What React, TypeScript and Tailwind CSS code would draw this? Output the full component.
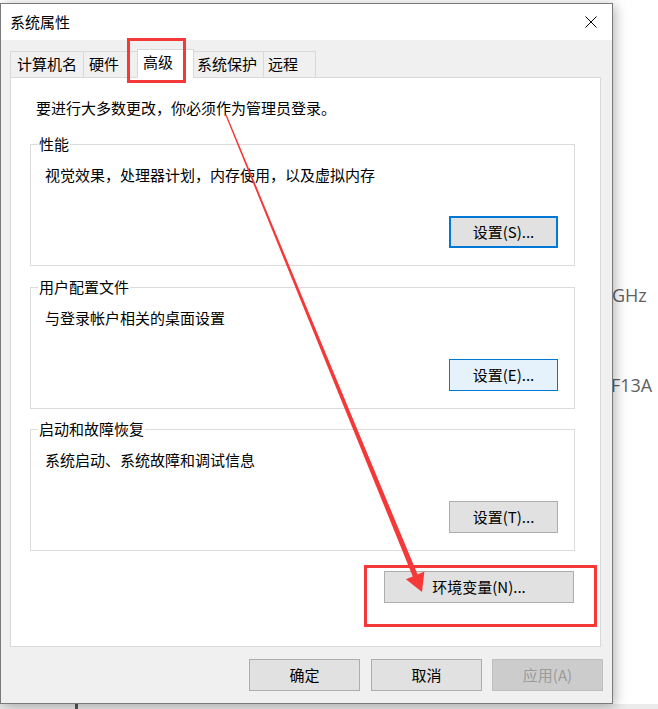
import React from "react";

type BtnProps = { children: React.ReactNode; className: string };
const Btn = ({ children, className }: BtnProps) => (
  <div className={`flex items-center justify-center leading-[20px] ${className}`}>{children}</div>
);

type GroupProps = { label: string; desc: string; btn: React.ReactNode; className: string };
const Group = ({ label, desc, btn, className }: GroupProps) => (
  <div className={`relative w-[545px] h-[122px] border border-[#dcdcdc] flex flex-col justify-between ${className}`}>
    <div className="absolute left-[7px] top-[-11px] bg-white px-[1px] leading-[20px]">{label}</div>
    <div className="pl-[14px] pt-[20px] leading-[20px]">{desc}</div>
    <div className="flex justify-end pr-[16px] pb-[17px]">{btn}</div>
  </div>
);

export default function App() {
  return (
    <div className="relative w-[658px] h-[709px] overflow-hidden bg-white pt-[3px] font-['Noto_Sans_CJK_SC',sans-serif] text-[15px] text-black">
      {/* desktop content behind the window */}
      <div className="absolute left-[612px] top-[281px] text-[18px] leading-[28px] text-[#5f5f5f] font-['Open_Sans',sans-serif]">GHz</div>
      <div className="absolute left-[611px] top-[371px] text-[18px] leading-[28px] text-[#5f5f5f] font-['Open_Sans',sans-serif]">F13A</div>
      <div className="absolute left-0 top-[704px] w-[658px] h-[5px] bg-[#ebebeb]">
        <div className="ml-[75px] w-[3px] h-[5px] bg-[#555555]" />
      </div>

      {/* window */}
      <div className="relative z-10 w-[613px] h-[701px] border border-[#7a7a7a] bg-[#f0f0f0] flex flex-col shadow-[2px_2px_12px_rgba(0,0,0,0.3)]">
        {/* title bar */}
        <div className="h-[36px] bg-white flex items-center justify-between pl-[9px] pr-[15px]">
          <span className="leading-[20px]">系统属性</span>
          <svg width="12" height="12" viewBox="0 0 12 12">
            <path d="M0.5 0.5 L11.5 11.5 M11.5 0.5 L0.5 11.5" stroke="#000" strokeWidth="1" fill="none" />
          </svg>
        </div>

        {/* body */}
        <div className="flex-1 pl-[9px] pt-[9px]">
          {/* tabs */}
          <div className="flex items-end h-[28px]">
            <div className="w-[74px] h-[26px] border-l border-t border-r border-[#d9d9d9] pl-[6px] leading-[24px]">计算机名</div>
            <div className="-ml-px w-[55px] h-[26px] border-l border-t border-r border-[#d9d9d9] pl-[5px] leading-[24px]">硬件</div>
            <div className="relative z-10 -ml-px -mb-px w-[57px] h-[29px] border-l border-t border-r border-[#d9d9d9] bg-white pl-[5px] leading-[23px]">高级</div>
            <div className="-ml-px w-[71px] h-[26px] border-l border-t border-r border-[#d9d9d9] pl-[3px] leading-[24px]">系统保护</div>
            <div className="-ml-px w-[53px] h-[26px] border-l border-t border-r border-[#d9d9d9] pl-[4px] leading-[24px]">远程</div>
          </div>

          {/* panel */}
          <div className="w-[591px] h-[570px] border border-[#d9d9d9] bg-white">
            <div className="mt-[20px] pl-[25px] leading-[20px]">要进行大多数更改，你必须作为管理员登录。</div>
            <div className="ml-[19px] mt-[26px]">
              <Group
                label="性能"
                desc="视觉效果，处理器计划，内存使用，以及虚拟内存"
                className=""
                btn={<Btn className="w-[109px] h-[32px] border-2 border-[#0078d7] bg-[#e1e1e1]">设置(S)...</Btn>}
              />
              <Group
                label="用户配置文件"
                desc="与登录帐户相关的桌面设置"
                className="mt-[21px]"
                btn={<Btn className="w-[109px] h-[32px] border border-[#0078d7] bg-[#e5f1fb]">设置(E)...</Btn>}
              />
              <Group
                label="启动和故障恢复"
                desc="系统启动、系统故障和调试信息"
                className="mt-[20px]"
                btn={<Btn className="w-[109px] h-[32px] border border-[#adadad] bg-[#e1e1e1]">设置(T)...</Btn>}
              />
              <div className="mt-[20px] w-[545px] flex justify-end pr-[1px]">
                <Btn className="w-[190px] h-[32px] border border-[#adadad] bg-[#e1e1e1]">环境变量(N)...</Btn>
              </div>
            </div>
          </div>

          {/* bottom buttons */}
          <div className="mt-[12px] ml-[239px] flex">
            <Btn className="w-[111px] h-[32px] border border-[#adadad] bg-[#e1e1e1]">确定</Btn>
            <Btn className="ml-[11px] w-[111px] h-[32px] border border-[#adadad] bg-[#e1e1e1]">取消</Btn>
            <Btn className="ml-[10px] w-[111px] h-[32px] border border-[#bfbfbf] bg-[#cccccc] text-[#9b9b9b]">应用(A)</Btn>
          </div>
        </div>
      </div>

      {/* annotations */}
      <div className="absolute z-20 left-[127px] top-[38px] w-[59px] h-[45px] border-[3px] border-[#f53838]" />
      <div className="absolute z-20 left-[364px] top-[565px] w-[233px] h-[62px] border-[3px] border-[#f53838]" />
      <svg className="absolute z-20 left-0 top-0 pointer-events-none" width="658" height="709" viewBox="0 0 658 709">
        <polygon
          points="226.6,114.8 417.6,574.4 424.4,571.6 422,592 405.9,579.2 412.8,576.4 225.4,115.2"
          fill="#f53838"
        />
      </svg>
    </div>
  );
}
